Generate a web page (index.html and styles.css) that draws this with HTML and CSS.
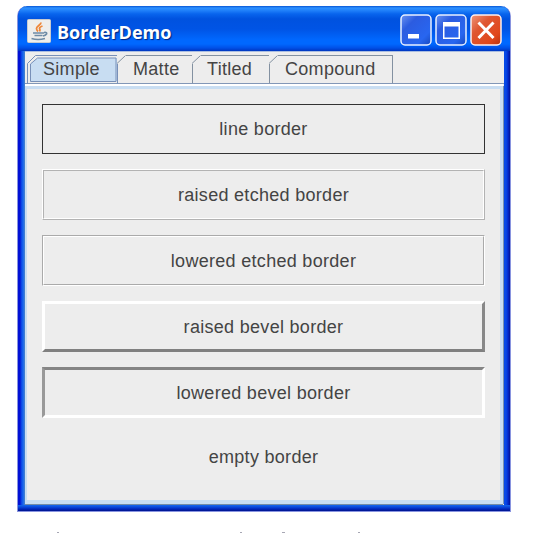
FILE: index.html
```html
<!DOCTYPE html>
<html lang="en">
<head>
<meta charset="utf-8">
<title>BorderDemo</title>
<link rel="stylesheet" href="styles.css">
</head>
<body>
<div class="window">
  <header class="titlebar">
    <svg class="logo" width="24" height="24" viewBox="0 0 24 24">
      <rect x=".5" y=".5" width="23" height="23" rx="1" fill="#eeeeec" stroke="#c9cbd0"/>
      <path d="M14 3.5C14 6 9.500 7 9.500 9.500Q9.500 11 11 12.500M15.500 7Q12.500 8 12.500 9.500Q13.500 11 12.500 12.500" fill="none" stroke="#ee873a" stroke-width="1.800"/>
      <path d="M6 14H17M7.500 16.500H15.500M4.500 19.500Q11 21.500 18 19.500M17 13.500Q20.500 13 19.500 15Q18.500 16.500 16 17" fill="none" stroke="#6f8ca6" stroke-width="1.700"/>
    </svg>
    <h1 class="title">BorderDemo</h1>
    <div class="controls">
      <svg width="32" height="32" viewBox="0 0 32 32">
        <defs>
          <linearGradient id="blue" x1="0" y1="0" x2="1" y2="1"><stop offset="0" stop-color="#6c94f1"/><stop offset=".3" stop-color="#2c5ce0"/><stop offset=".75" stop-color="#2866f0"/><stop offset="1" stop-color="#1748be"/></linearGradient>
          <linearGradient id="red" x1="0" y1="0" x2="1" y2="1"><stop offset="0" stop-color="#ef967b"/><stop offset=".35" stop-color="#df5732"/><stop offset=".75" stop-color="#e1471b"/><stop offset="1" stop-color="#b83210"/></linearGradient>
        </defs>
        <rect x="1" y="1" width="30" height="30" rx="4" fill="url(#blue)" stroke="#e9f0ff" stroke-width="1.500"/>
        <path d="M8 20H19V24.500H8Z" fill="#fff"/>
      </svg>
      <svg width="32" height="32" viewBox="0 0 32 32">
        <rect x="1" y="1" width="30" height="30" rx="4" fill="url(#blue)" stroke="#e9f0ff" stroke-width="1.500"/>
        <path d="M8 8H25V25H8ZM9.500 12.500V23.500H23.500V12.500Z" fill="#fff" fill-rule="evenodd"/>
      </svg>
      <svg width="32" height="32" viewBox="0 0 32 32">
        <rect x="1" y="1" width="30" height="30" rx="4" fill="url(#red)" stroke="#fff0ed" stroke-width="1.500"/>
        <path d="M8.500 8.500L23.500 24M23.500 8.500L8.500 24" stroke="#fff" stroke-width="3"/>
      </svg>
    </div>
  </header>
  <main class="client">
    <nav class="tabs">
      <div class="tab selected">
        <svg class="outline" width="91" height="29" viewBox="0 0 91 29"><path d="M3.500 26V8.500L10.500 3H90V26Z" fill="#c8ddf2"/><path d="M.5 29V8.500L8.500.5H90.500V29M3.500 26.500V9L10.500 3H89V26.500Z" fill="none" stroke="#7890b8"/></svg>
        <span>Simple</span>
      </div>
      <div class="tab matte"><svg class="notch" width="9" height="9"><path d="M0 8.500L8.500.5" stroke="#8391a1"/></svg><span>Matte</span></div>
      <div class="tab titled"><svg class="notch" width="9" height="9"><path d="M0 8.500L8.500.5" stroke="#8391a1"/></svg><span>Titled</span></div>
      <div class="tab compound"><svg class="notch" width="9" height="9"><path d="M0 8.500L8.500.5" stroke="#8391a1"/></svg><span>Compound</span></div>
    </nav>
    <section class="panel">
      <div class="sample line">line border</div>
      <div class="sample etched-raised"><div>raised etched border</div></div>
      <div class="sample etched-lowered"><div>lowered etched border</div></div>
      <div class="sample bevel-raised">raised bevel border</div>
      <div class="sample bevel-lowered">lowered bevel border</div>
      <div class="sample">empty border</div>
    </section>
  </main>
</div>
<svg class="marks" width="546" height="1"><path d="M57 .5H59M240 .5H242M282 .5H285M358 .5H360" stroke="#a7a7b4"/></svg>
</body>
</html>
```
FILE: styles.css
```css
* { box-sizing: border-box; }
body {
  margin: 0;
  padding: 6px 0 0 17px;
  width: 546px;
  height: 533px;
  overflow: hidden;
  background: #fff;
  font: 18px/20px "Liberation Sans", Arial, sans-serif;
  letter-spacing: .3px;
  color: #444;
}
.window {
  display: flex;
  flex-direction: column;
  width: 494px;
  height: 506px;
  padding: 0 6px 6px 7px;
  border: 1px solid #8994df;
  border-top: 0;
  border-radius: 10px 10px 0 0;
  overflow: hidden;
  background:
    linear-gradient(to bottom, #1468ed, #0a49db 2px, #0028bd 4px, #00128b) bottom / 100% 6px no-repeat,
    linear-gradient(to right, #0010d5 0 2px, #0a3de2 3px, #1767ee 5px, #4c83c9 7px) left / 7px 100% no-repeat,
    linear-gradient(to right, #0649e6 0 2px, #0029cd 4px, #001293) right / 6px 100% no-repeat;
}
.titlebar {
  display: flex;
  align-items: center;
  flex: 0 0 45px;
  margin: 0 -6px 0 -7px;
  padding: 3px 8px 0 9px;
  background: linear-gradient(#0755d5 0, #2d91ff 2px, #2384fb 4px, #0864ed 8px, #0052df 13px, #0054e5 23px, #0068ff 34px, #0068ff 38px, #0050e7 42px, #0036bf 45px);
}
.logo { margin-top: 2px; }
.title {
  margin: 3px 0 0 6px;
  font: bold 18px/24px "Open Sans", sans-serif;
  letter-spacing: 0;
  color: #fff;
  text-shadow: 1px 1px 1px #00247f;
}
.controls { display: flex; gap: 3px; margin-left: auto; }
.controls svg { display: block; }
.client {
  display: flex;
  flex-direction: column;
  flex: 1;
  background: #ededed;
  border-top: 1px solid #a9bde1;
}
.tabs {
  display: flex;
  height: 32px;
  padding: 3px 0 0 2px;
  border-bottom: 1px solid #8297b7;
}
.tab {
  position: relative;
  height: 28px;
  padding: 3px 0 0 15px;
  border-top: 1px solid #8391a1;
  border-right: 1px solid #8391a1;
}
.tab span { position: relative; }
.selected { width: 91px; height: 29px; padding: 4px 0 0 16px; border: 0; }
.outline { position: absolute; left: 0; top: 0; }
.notch { position: absolute; left: -1px; top: -1px; background: #ededed; }
.matte { width: 75px; }
.titled { width: 77px; padding-left: 14px; }
.compound { width: 123px; }
.panel {
  display: flex;
  flex-direction: column;
  gap: 15px;
  flex: 1;
  padding: 15px 16px 0 15px;
  border: solid #c8ddf2;
  border-width: 3px 3px 4px 2px;
  box-shadow: 1px 0 #7993b0, 0 1px #748ca5;
  margin: 2px 1px 1px 0;
  position: relative;
}
.panel::before {
  content: "";
  position: absolute;
  inset: -5px -3px auto -2px;
  height: 2px;
  background: #fff;
}
.sample {
  width: 443px;
  height: 51px;
  line-height: 48px;
  text-align: center;
}
.line { height: 50px; border: 1px solid #333; }
.etched-raised { border: 1px solid; border-color: #fff #b3b3b3 #b3b3b3 #fff; }
.etched-raised div { height: 49px; border: 1px solid; border-color: #b3b3b3 #fff #fff #b3b3b3; }
.etched-lowered { border: 1px solid; border-color: #aaa #fff #fff #aaa; }
.etched-lowered div { height: 49px; border: 1px solid; border-color: #fff #aaa #aaa #fff; }
.bevel-raised { border: 3px solid; border-color: #fff #888 #808080 #fff; line-height: 46px; }
.bevel-lowered { border: 3px solid; border-color: #858585 #fff #fff #999; line-height: 46px; }
.marks { display: block; margin: 20px 0 0 -17px; }
```
